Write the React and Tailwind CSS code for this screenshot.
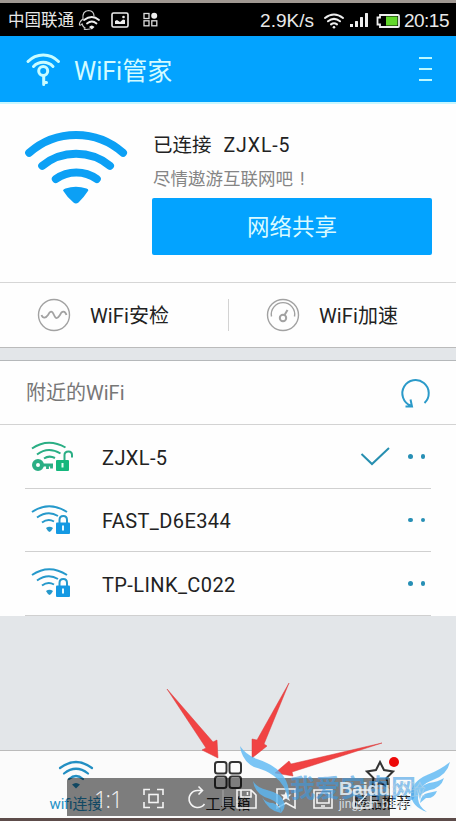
import clsx from 'clsx';

const networks = [
  { name: 'ZJXL-5', open: true, connected: true },
  { name: 'FAST_D6E344' },
  { name: 'TP-LINK_C022' },
];

export default function App() {
  return (
    <div className="relative flex h-[821px] w-[456px] flex-col overflow-hidden bg-[#e3e6e9] font-['Roboto','Noto_Sans_CJK_SC',sans-serif] text-[#222]">
      <StatusBar />
      <Header />
      <Connection />
      <div className="grid h-[66px] shrink-0 grid-cols-2 items-center border-y border-t-[#d6d6d6] border-b-[#bbb] bg-[#fefefe]">
        <Shortcut label="WiFi安检" icon={<PulseIcon />} />
        <Shortcut label="WiFi加速" icon={<GaugeIcon />} divided />
      </div>
      <div className="mt-3 shrink-0 border-t border-[#b5b8ba] bg-[#fefefe]">
        <div className="flex h-[64px] items-center justify-between border-b border-[#d3d3d3] pr-[24px] pl-[26px]">
          <h2 className="text-[20px] text-[#777]">附近的WiFi</h2>
          <RefreshIcon />
        </div>
        {networks.map((n) => <NetworkRow key={n.name} {...n} />)}
      </div>
      <BottomNav />
      <Arrows />
      <ViewerToolbar />
      <Watermark />
    </div>
  );
}

function StatusBar() {
  return (
    <div className="flex h-[36px] shrink-0 items-center justify-between border-t-[3px] border-[#a09892] bg-black pr-[7px] pl-[8px] text-[#e8e8e8]">
      <div className="flex items-center">
        <span className="pt-[3px] text-[16.5px] leading-none">中国联通</span>
        <svg className="ml-1 h-[22px] w-[23px]" viewBox="0 0 23 22" fill="none" stroke="#ccc" strokeWidth="1.2" strokeLinecap="round">
          <path d="M5 10Q4 2 10.500 1.500Q16 2 16 7M5 10Q1 13 1.500 16Q3 16.500 4 15Q5 18 7 19Q5 20.500 8 20.500L12 20" />
          <path d="M6 11Q14 5 21 11M9 14.500Q14 10.500 18.500 14.500" strokeWidth="1.800" stroke="#eee" />
          <path d="M11 18Q13.800 15 16.500 18L13.800 20.500Z" fill="#eee" stroke="none" />
        </svg>
        <svg className="ml-[10px] h-4 w-[18px]" viewBox="0 0 18 16">
          <rect x="1" y="1" width="16" height="14" rx="1.5" fill="none" stroke="#eee" strokeWidth="1.6" />
          <path d="M4 12V9L6 8L9 10L12 7.500L14 8V12Z" fill="#eee" />
          <circle cx="12.5" cy="5" r="1.3" fill="#eee" />
        </svg>
        <svg className="ml-[14px] h-[15px] w-[15px]" viewBox="0 0 15 15" fill="none" stroke="#ddd" strokeWidth="1.3">
          <rect x="1" y="1.5" width="5" height="5" />
          <rect x="1" y="8.8" width="5" height="5" />
          <rect x="8.8" y="8.8" width="5" height="5" />
          <circle cx="11.2" cy="3.8" r="3" fill="#eee" stroke="none" />
        </svg>
      </div>
      <div className="flex items-center pt-[2px] font-['Liberation_Sans',sans-serif] text-[19px] leading-none">
        <span>2.9K/s</span>
        <svg className="ml-[10px] h-4 w-5" viewBox="0 0 20 16" fill="none" stroke="#eee" strokeWidth="2" strokeLinecap="round">
          <path d="M1 5Q10-2 19 5M4 8.3Q10 3.5 16 8.3M7 11.4Q10 9 13 11.4" />
          <circle cx="10" cy="14.2" r="1.3" fill="#eee" stroke="none" />
        </svg>
        <svg className="ml-[5px] h-[15px] w-[20px]" viewBox="0 0 20 15" fill="#eee">
          <rect x="1" y="11" width="3" height="3" />
          <rect x="6" y="8" width="3" height="6" rx=".5" />
          <rect x="11" y="4" width="3" height="10" rx=".5" />
          <rect x="16" y="0" width="3" height="14" rx=".5" />
        </svg>
        <svg className="ml-[7px] h-[14px] w-[24px]" viewBox="0 0 24 14">
          <path d="M4 1H22Q23 1 23 2V12Q23 13 22 13H4V10.5H1.5V3.5H4Z" fill="none" stroke="#eee" strokeWidth="1.8" />
          <rect x="10" y="2.5" width="11.5" height="9" fill="#62d72b" />
        </svg>
        <span className="ml-[4px] tracking-[-0.5px]">20:15</span>
      </div>
    </div>
  );
}

function Header() {
  return (
    <header className="flex h-[68px] shrink-0 items-center border-b-2 border-[#c8f7ff] bg-[#03a3ff] pr-[24px] pl-[25px]">
      <svg className="h-[37px] w-[36px]" viewBox="0 0 36 37" fill="none" stroke="#c9fcff" strokeWidth="3" strokeLinecap="round">
        <path d="M3 10.500A21 21 0 0 1 33.500 10.500M8.500 15.500A13.500 13.500 0 0 1 28 15.500" />
        <circle cx="18.200" cy="20" r="4.500" />
        <path d="M18.700 25V33.500M19 31.500H21.500" />
      </svg>
      <h1 className="ml-[13px] pt-[4px] text-[25px] leading-none text-[#d3fbff]">WiFi管家</h1>
      <div className="ml-auto flex w-[13px] flex-col gap-[9px]">
        <i className="h-[2px] bg-[#bcf8ff]" />
        <i className="h-[2px] bg-[#bcf8ff]" />
        <i className="h-[2px] bg-[#bcf8ff]" />
      </div>
    </header>
  );
}

function Connection() {
  return (
    <section className="flex h-[178px] shrink-0 bg-[#fefefe] pt-[26px] pl-[25px]">
      <svg className="h-[76px] w-[103px]" viewBox="0.5 0.5 103 76" fill="none" stroke="#0ca0f5" strokeWidth="8" strokeLinecap="round">
        <path d="M4.700 23.300A70.700 70.700 0 0 1 98.500 23.300M17.700 36.300A54 54 0 0 1 85.500 36.300M31.300 49.500A35.500 35.500 0 0 1 72.300 49.500" />
        <path d="M38.500 61Q39 59.500 41 59Q51.300 55.500 62 59Q64 59.500 63.800 61Q60 67 54 73Q51.300 75 49 73Q42 67 38.500 61Z" fill="#0ca0f5" stroke="none" />
      </svg>
      <div className="ml-[24px] w-[280px]">
        <p className="mt-[3px] flex gap-[12px] pl-px text-[19.500px] leading-[26px]">
          <span>已连接</span>
          <span className="tracking-[0.9px]">ZJXL-5</span>
        </p>
        <p className="mt-[8px] pl-px text-[17.500px] leading-[24px] text-[#858585]">尽情遨游互联网吧<span className="ml-[7px]">!</span></p>
        <button className="mt-[7px] h-[57px] w-full rounded-[2px] bg-[#03a3ff] pt-[3px] text-[22.500px] text-[#d9faff]">网络共享</button>
      </div>
    </section>
  );
}

function Shortcut({ label, icon, divided }) {
  return (
    <div className={clsx('flex h-8 items-center gap-[19px] pl-[37px]', divided && 'border-l border-[#d3d3d3]')}>
      {icon}
      <span className="pt-[2px] text-[20px] tracking-[0.1px]">{label}</span>
    </div>
  );
}

function PulseIcon() {
  return (
    <svg className="h-[34px] w-[34px]" viewBox="0 0 34 34" fill="none" stroke="#a2a2a2" strokeWidth="1.4">
      <circle cx="17" cy="17" r="15.500" />
      <path d="M4.500 17C6 21 9 20 11 17C13 13 15 12 17 17C19 22 21 20 23 17C25 12 28 13 29.500 17" strokeWidth="1.800" />
    </svg>
  );
}

function GaugeIcon() {
  return (
    <svg className="h-[34px] w-[34px]" viewBox="0 0 34 34" fill="none" stroke="#a2a2a2" strokeWidth="1.4">
      <circle cx="17" cy="17" r="15.500" />
      <path d="M5.500 18.500A11.700 11.700 0 1 1 28.500 18.500" />
      <circle cx="17" cy="20" r="3.200" strokeWidth="2" />
      <path d="M18.500 17L21.500 12" strokeWidth="2" />
    </svg>
  );
}

function RefreshIcon() {
  return (
    <svg className="h-[32px] w-[32px]" viewBox="0 0 32 32" fill="none" stroke="#2b9ac9" strokeWidth="2">
      <path d="M24.500 26A13.200 13.200 0 1 0 10.500 28.500M5.500 29.500H12L10.500 22.500" />
    </svg>
  );
}

function NetworkRow({ name, open, connected }) {
  return (
    <div className="mx-[25px] flex h-[63.600px] items-center border-b border-[#d0d0d0] pl-[6px]">
      {open ? <OpenWifiIcon /> : <LockedWifiIcon />}
      <span className="ml-[29px] pt-[3px] text-[20px] tracking-[0.4px]">{name}</span>
      {connected && (
        <svg className="ml-auto h-[20px] w-[30px]" viewBox="0 0 30 20" fill="none" stroke="#278fb0" strokeWidth="2">
          <path d="M1.500 8L12 18L29 2" />
        </svg>
      )}
      <div className={clsx('mr-[6px] flex gap-[8px]', connected ? 'ml-[18px]' : 'ml-auto')}>
        <i className="h-[4.500px] w-[4.500px] rounded-full bg-[#278fb5]" />
        <i className="h-[4.500px] w-[4.500px] rounded-full bg-[#278fb5]" />
      </div>
    </div>
  );
}

function OpenWifiIcon() {
  return (
    <svg className="h-[32px] w-[42px]" viewBox="0 0 42 32" fill="none" stroke="#2aae84" strokeWidth="2">
      <path d="M1 8.500Q17-2.500 34.500 7.500M6 14.500Q17 6 29.500 13.500M13 18.500Q18 15 24 18" />
      <circle cx="7" cy="25" r="4" strokeWidth="4" />
      <path d="M11 25H22M16.500 25V29M20.500 25V28.500" strokeWidth="2.800" />
      <path d="M33.500 21V15Q33.500 11.500 37.500 11.500Q41 11.500 41 15V17.500" />
      <rect x="25" y="20" width="13" height="11" rx="1" fill="#15b77d" stroke="none" />
      <path d="M31.500 23V27.500" stroke="#e5fff4" />
    </svg>
  );
}

function LockedWifiIcon() {
  return (
    <svg className="h-[32px] w-[42px]" viewBox="0 0 42 32" fill="none" stroke="#2699cb" strokeWidth="2">
      <path d="M1 8Q18-3.500 36 8M6 13.500Q17 6 27 12M11 18.500Q17 14 23 17.500" />
      <path d="M15 24Q18.500 21.500 22 24Q20.500 27 18.500 28Q16.500 27 15 24Z" fill="#2698cb" stroke="none" />
      <path d="M28.500 20V16Q28.500 12 32.300 12Q36 12 36 16V20" />
      <rect x="25" y="18.500" width="14" height="11.500" rx="1" fill="#1499e3" stroke="none" />
      <path d="M32 21.500V26.500" stroke="#e5faff" />
    </svg>
  );
}

function BottomNav() {
  return (
    <nav className="mt-auto grid h-[71px] shrink-0 grid-cols-3 border-t border-b-[3px] border-t-[#bbb] border-b-[#5d4c4a] bg-[#fbfbfb]">
      <div className="flex flex-col items-center pt-[9px] text-[#2491c7]">
        <svg className="h-[29px] w-[36px]" viewBox="0 0 36 29" fill="none" stroke="#238fc3" strokeWidth="2.200" strokeLinecap="round">
          <path d="M2 8Q18-4 34 8M6 13.500Q18 4 30 13.500M11 19Q18 13 25 19" />
          <path d="M14 24.500Q18 21.500 22 24.500L18 28.500Z" fill="#238fc3" stroke="none" />
        </svg>
        <span className="mt-[3px] text-[15px] leading-6">wifi连接</span>
      </div>
      <div className="flex flex-col items-center pt-[10px]">
        <svg className="h-[29px] w-[28px]" viewBox="0 0 28 29" fill="none" stroke="#333" strokeWidth="2">
          <rect x="1" y="1" width="11.500" height="11.500" rx="2.500" />
          <rect x="15.500" y="1" width="11.500" height="11.500" rx="2.500" />
          <rect x="1" y="15.500" width="11.500" height="11.500" rx="2.500" />
          <rect x="15.500" y="15.500" width="11.500" height="11.500" rx="2.500" />
        </svg>
        <span className="mt-[2px] text-[15px] leading-6">工具箱</span>
      </div>
      <div className="relative flex flex-col items-center pt-[9px]">
        <svg className="h-[29px] w-[30px]" viewBox="0 0 30 29" fill="none" stroke="#333" strokeWidth="2">
          <path d="M15 2L19 10L28 11.500L21.500 18L23 27L15 22.500L7 27L8.500 18L2 11.500L11 10Z" />
        </svg>
        <i className="absolute top-[6px] left-[85px] h-[10px] w-[10px] rounded-full bg-[#ed0909]" />
        <span className="mt-[3px] pl-[4px] text-[14.500px] leading-6">精品推荐</span>
      </div>
    </nav>
  );
}

function Arrows() {
  return (
    <svg className="absolute inset-0 h-full w-full" viewBox="0 0 456 821" fill="#f14343" stroke="#d93c3c" strokeWidth=".5">
      <path d="M167 689L213 742L217 740L218 758L202 750L206 748Z" />
      <path d="M289 683L264 744L267 746L252 758L252 739L257 740Z" />
      <path d="M382 743L292 772L293 776L275 773L289 761L291 764Z" />
    </svg>
  );
}

function ViewerToolbar() {
  return (
    <div className="absolute top-[778px] left-[67px] h-[38px] w-[323px] rounded-tl-[3px] bg-black/50">
      <svg className="h-full w-full" viewBox="67 778 323 38" fill="none" stroke="#f4f4f4" strokeWidth="1.600">
        <g fill="#f4f4f4" stroke="none" fontSize="23" className="font-['Open_Sans',sans-serif] font-light">
          <text x="94" y="808">1</text>
          <text x="105.500" y="808">:</text>
          <text x="110" y="808">1</text>
        </g>
        <path d="M144 795V789.500H150M157 789.500H163V795M163 802V807.500H157M150 807.500H144V802" />
        <rect x="149" y="794.500" width="9" height="8" />
        <path d="M204.500 804A8.500 8.500 0 1 1 198 790.500H202M198.500 786.500L202.500 790.500L198.500 794.500" />
        <path d="M223 790V807" stroke="#999" />
        <path d="M237 790H251L256 795V808H237ZM241 790V797H251V790M247.500 792V795" />
        <path d="M277 789H295V808L286 803L277 808Z" />
        <path d="M286 791L287.500 794.500H291.500L288.500 797L290 801L286 798.500L282 801L283.500 797L280.500 794.500H284.500Z" fill="#f4f4f4" stroke="none" />
        <path d="M314 790H332V808H314ZM317 793H329V803H317ZM321 806H325" />
        <path d="M354 790H371V808H354ZM358 804L367 794" />
      </svg>
    </div>
  );
}

function Watermark() {
  return (
    <svg className="absolute top-[740px] left-[236px] h-[78px] w-[220px]" viewBox="236 740 220 78">
      <g fill="#5bb8f4" fillOpacity=".8">
        <path d="M240 746Q246 755 257 759Q276 765 284 777Q291 788 288 800Q286 785 274 776Q266 770 254 767Q242 761 240 746Z" />
        <path d="M253 781Q257 788 267 790Q281 793 284 802Q286 808 281 813Q281 803 270 799Q255 795 253 781Z" />
        <path d="M262 797Q266 803 273 803Q280 805 281 813Q268 811 262 797Z" />
        <path d="M450 762Q447 775 433 780Q418 785 418 799Q419 807 427 812Q412 807 411 795Q411 782 427 775Q440 770 450 762Z" />
        <path d="M444 778Q441 788 430 790Q420 792 420 800Q416 787 429 783Q438 782 444 778Z" />
        <path d="M437 791Q434 799 426 798L420 803Q421 794 428 793Z" />
      </g>
      <text x="290" y="797" textLength="126" fill="#3b9be5" fillOpacity=".6" fontSize="25" className="font-['Noto_Sans_CJK_SC',sans-serif] font-bold">我爱安卓网</text>
      <g fill="#e8f2f8" fillOpacity=".85" className="font-['Liberation_Sans',sans-serif]">
        <text x="339" y="795" fontSize="19" textLength="51" className="font-bold">Baidu</text>
        <text x="392" y="795" fontSize="17" fill="#c5d5df" fillOpacity=".5">经验</text>
        <text x="339" y="808" fontSize="12" textLength="73">jingyan.baidu</text>
      </g>
    </svg>
  );
}
